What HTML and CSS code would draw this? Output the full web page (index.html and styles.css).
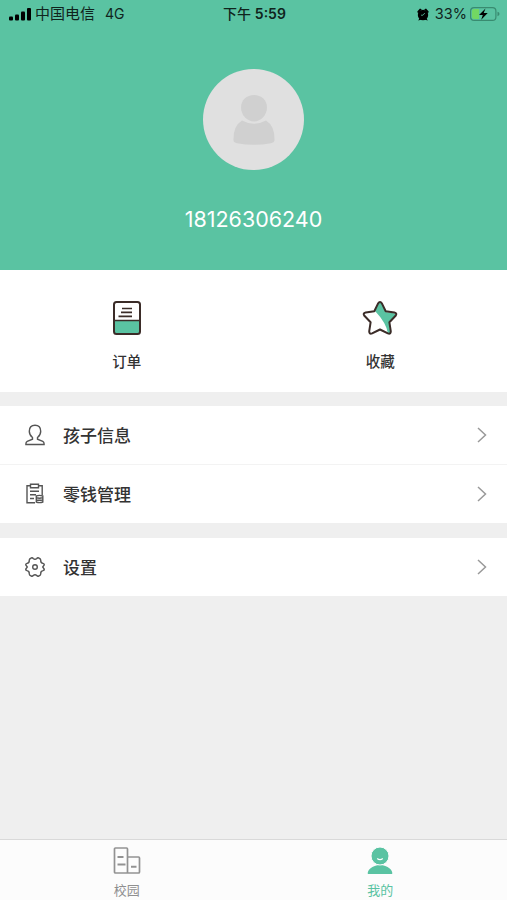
FILE: index.html
```html
<!DOCTYPE html>
<html lang="zh-CN">
<head>
<meta charset="utf-8">
<meta name="viewport" content="width=device-width, initial-scale=1">
<title>我的</title>
<link rel="stylesheet" href="styles.css">
</head>
<body>
<header class="header">
  <div class="status">
    <div class="status-left">
      <svg class="signal" width="22" height="13" viewBox="0 0 22 13">
        <rect x="0" y="8.500" width="4" height="4" rx="1"/>
        <rect x="6" y="6.500" width="4" height="6" rx="1"/>
        <rect x="12" y="3.500" width="4" height="9" rx="1"/>
        <rect x="18" y="0" width="4" height="12.500" rx="1"/>
      </svg>
      <span class="carrier">中国电信</span>
      <span class="network">4G</span>
    </div>
    <div class="status-time">下午 <span class="clock">5:59</span></div>
    <div class="status-right">
      <svg width="12" height="13" viewBox="0 0 12 13">
        <circle cx="6" cy="7" r="5.200"/>
        <path d="M0.300 3.600 3 .6l1.800.8L1 5.400zM11.700 3.600 9 .6l-1.800.8L11 5.400zM1.200 12.500l1.500-2.500 2 1.500zM10.800 12.500l-1.500-2.500-2 1.500z"/>
        <path d="M7.800 5 6 7.200H4" fill="none" stroke="#5ac3a2" stroke-width=".8"/>
      </svg>
      <span class="percent">33%</span>
      <svg width="30" height="14" viewBox="0 0 30 14">
        <rect x=".6" y=".6" width="25.300" height="12.800" rx="3.500" fill="none" stroke="#398b70" stroke-width="1.200"/>
        <path d="M4 2h5v10H4a2 2 0 0 1-2-2V4a2 2 0 0 1 2-2z" fill="#72d763"/>
        <path d="M27.500 4.800q2 .6 2 2.200t-2 2.200z" fill="#398b70"/>
        <path d="M15.500 1.500 9 8h3.800l-1.600 4.700L17.700 6h-4z"/>
      </svg>
    </div>
  </div>
  <div class="avatar">
    <svg width="44" height="52" viewBox="0 0 44 52" fill="#d0d0d0">
      <path d="M22 1c7.500 0 13 5 13 12.500C35 21 29 27.500 22 27.500S9 21 9 13.500C9 6 14.500 1 22 1z"/>
      <path d="M10 26.500q12 6.500 24 0 9 5.500 8.500 20-.2 2-3.500 2.700-17 3-34 0-3.300-.7-3.500-2.700Q1 32 10 26.500z"/>
    </svg>
  </div>
  <div class="phone">18126306240</div>
</header>

<section class="shortcuts">
  <a class="shortcut">
    <svg width="28" height="36" viewBox="0 0 28 36">
      <path d="M1 20.500h26v13H1z" fill="#5ac3a2"/>
      <rect x="1" y="2" width="26" height="32" rx="2.500" fill="none" stroke="#3b2c28" stroke-width="2"/>
      <path d="M1 20.500h26M9 8.500h10M8 12.300h11M5.500 16.300h13.500" fill="none" stroke="#3b2c28" stroke-width="1.700"/>
    </svg>
    <span>订单</span>
  </a>
  <a class="shortcut">
    <svg width="36" height="36" viewBox="0 0 36 36">
      <path d="M18 2.500q1 0 1.500 1l4.300 8.500 9 1.500q1.800.7.700 2.200L27 22.500l1.400 10q-.2 1.800-2.400 1.200Q24.500 23 13 11l3.500-7.500q.5-1 1.500-1z" fill="#5ac3a2"/>
      <path d="M16 3.600q2-3 4 0l3.700 7.600 8.600 1.300q3.200.8 1.300 3.300l-6.200 6.500 1.400 9q0 3.200-2.900 2.100L18 29.500l-7.900 3.900q-2.900 1.100-2.900-2.100l1.400-9-6.200-6.500q-1.900-2.500 1.300-3.300l8.600-1.300z" fill="none" stroke="#3b2c28" stroke-width="2" stroke-linejoin="round"/>
    </svg>
    <span>收藏</span>
  </a>
</section>

<section class="menu">
  <a class="item">
    <svg class="item-icon" width="20" height="22" viewBox="0 0 20 22">
      <path d="M7.500 13.500C5.400 12 4.300 9.800 4.300 7.300c0-3.700 2.200-6.100 5.700-6.100s5.700 2.400 5.700 6.100c0 2.500-1.100 4.700-3.200 6.200v1.700l5.300 2.200q1.500.7 1.300 3.100H.9q-.2-2.400 1.300-3.100l5.300-2.200z"/>
    </svg>
    <span class="label">孩子信息</span>
    <svg class="arrow" width="10" height="16" viewBox="0 0 10 16"><path d="M1 1l7.500 7L1 15"/></svg>
  </a>
  <a class="item">
    <svg class="item-icon" width="20" height="22" viewBox="0 0 20 22">
      <path d="M5 2.700H2v17h8M14 2.700h3.200V12M5.500 1.200h8v3.600h-8zM5 8.200h9M5 11.700h6M5 15.500h4"/>
      <path d="M11.300 13q3-1.300 6.500 0v6q-3.200 1.300-6.500 0zM11.300 14.700q3 1 6.500 0M11.300 16.800q3 1 6.500 0"/>
    </svg>
    <span class="label">零钱管理</span>
    <svg class="arrow" width="10" height="16" viewBox="0 0 10 16"><path d="M1 1l7.500 7L1 15"/></svg>
  </a>
</section>

<section class="menu last">
  <a class="item">
    <svg class="item-icon" width="20" height="22" viewBox="0 0 20 22">
      <path d="M6.200 2q1.300-.5 2 .5 1.800 1.700 3.600 0 .7-1 2-.5 2 .7 2 2.200-.4 2.700 2.200 3.200 1.500.4 1.200 1.600-1.500 2-1.500 2t1.500 2q.3 1.200-1.200 1.600-2.600.5-2.200 3.200 0 1.500-2 2.200-1.300.5-2-.5-1.800-1.700-3.600 0-.7 1-2 .5-2-.7-2-2.200.4-2.700-2.200-3.200-1.500-.4-1.200-1.600 1.500-2 1.500-2T.8 9q-.3-1.200 1.200-1.600 2.600-.5 2.200-3.200 0-1.500 2-2.200z"/>
      <circle cx="10" cy="11" r="2.300"/>
    </svg>
    <span class="label">设置</span>
    <svg class="arrow" width="10" height="16" viewBox="0 0 10 16"><path d="M1 1l7.500 7L1 15"/></svg>
  </a>
</section>

<nav class="tabbar">
  <a class="tab">
    <svg width="28" height="28" viewBox="0 0 28 28" fill="none" stroke="#929292" stroke-width="1.700">
      <path d="M14.500 26H2.500q-1 0-1-1V2q0-1 1-1h11q1 0 1 1v24h11q1 0 1-1V11q0-1-1-1h-11"/>
      <path d="M4.500 10h6M4.500 17.500h8M18 19.700h5.500" stroke-width="2"/>
    </svg>
    <span>校园</span>
  </a>
  <a class="tab active">
    <svg width="28" height="28" viewBox="0 0 28 28" fill="#5ac3a2">
      <path d="M1.800 27q-.5-3 2.500-5.500 4-3.500 9.700-3.500t9.700 3.500q3 2.500 2.500 5.500z"/>
      <circle cx="14" cy="9" r="9" stroke="#fcfcfc" stroke-width="1"/>
      <path d="M11.200 11.500q2.800 2.300 5.600 0" fill="none" stroke="#fff" stroke-width="1.200"/>
    </svg>
    <span>我的</span>
  </a>
</nav>
</body>
</html>
```
FILE: styles.css
```css
* {
  box-sizing: border-box;
}

body {
  margin: 0;
  height: 900px;
  display: flex;
  flex-direction: column;
  background: #efefef;
  color: #333;
  font-family: Inter, "Noto Sans CJK SC", sans-serif;
}

svg {
  display: block;
  flex: none;
}

.header {
  height: 270px;
  background: #5ac3a2;
  display: flex;
  flex-direction: column;
  align-items: center;
}

.status {
  width: 100%;
  height: 28px;
  padding: 0 7px 0 9px;
  display: grid;
  grid-template-columns: 1fr auto 1fr;
  align-items: center;
  font-size: 14px;
  line-height: 28px;
  color: #10241d;
  white-space: nowrap;
}

.status-left,
.status-right {
  display: flex;
  align-items: center;
}

.status-right {
  justify-content: flex-end;
  gap: 4px;
}

.carrier {
  margin-left: 4px;
  font-size: 15px;
}

.network {
  margin-left: 10px;
}

.percent {
  margin-left: 2px;
  margin-right: -1px;
  font-size: 14.5px;
}

.status-time {
  font-weight: 500;
}

.clock {
  font-weight: 600;
}

.avatar {
  width: 101px;
  height: 101px;
  margin-top: 41px;
  border-radius: 50%;
  background: #e0e0e0;
  display: flex;
  align-items: center;
  justify-content: center;
}

.phone {
  margin-top: 34px;
  font-size: 21.5px;
  line-height: 30px;
  color: #fff;
}

.shortcuts {
  height: 122px;
  display: flex;
  background: #fff;
}

.shortcut {
  flex: 1;
  padding-top: 30px;
  display: flex;
  flex-direction: column;
  align-items: center;
  gap: 16px;
  font-size: 14.5px;
  line-height: 20px;
  font-weight: 500;
}

.menu {
  margin-top: 14px;
  background: #fff;
}

.menu.last {
  margin-top: 15px;
}

.item {
  height: 58px;
  padding: 0 20px 0 25px;
  display: flex;
  align-items: center;
}

.item + .item {
  height: 59px;
  border-top: 1px solid #f3f3f3;
}

.item-icon {
  fill: none;
  stroke: #555;
  stroke-width: 1.4;
}

.label {
  flex: 1;
  margin-left: 18px;
  padding-top: 2px;
  font-size: 17px;
  line-height: 24px;
  font-weight: 500;
}

.arrow {
  fill: none;
  stroke: #999;
  stroke-width: 1.5;
}

.tabbar {
  height: 61px;
  margin-top: auto;
  border-top: 1px solid #d9d9d9;
  background: #fcfcfc;
  display: flex;
}

.tab {
  flex: 1;
  padding-top: 7px;
  display: flex;
  flex-direction: column;
  align-items: center;
  gap: 6px;
  font-size: 13px;
  line-height: 18px;
  color: #8f8f8f;
}

.active {
  color: #5ac3a2;
}
```
